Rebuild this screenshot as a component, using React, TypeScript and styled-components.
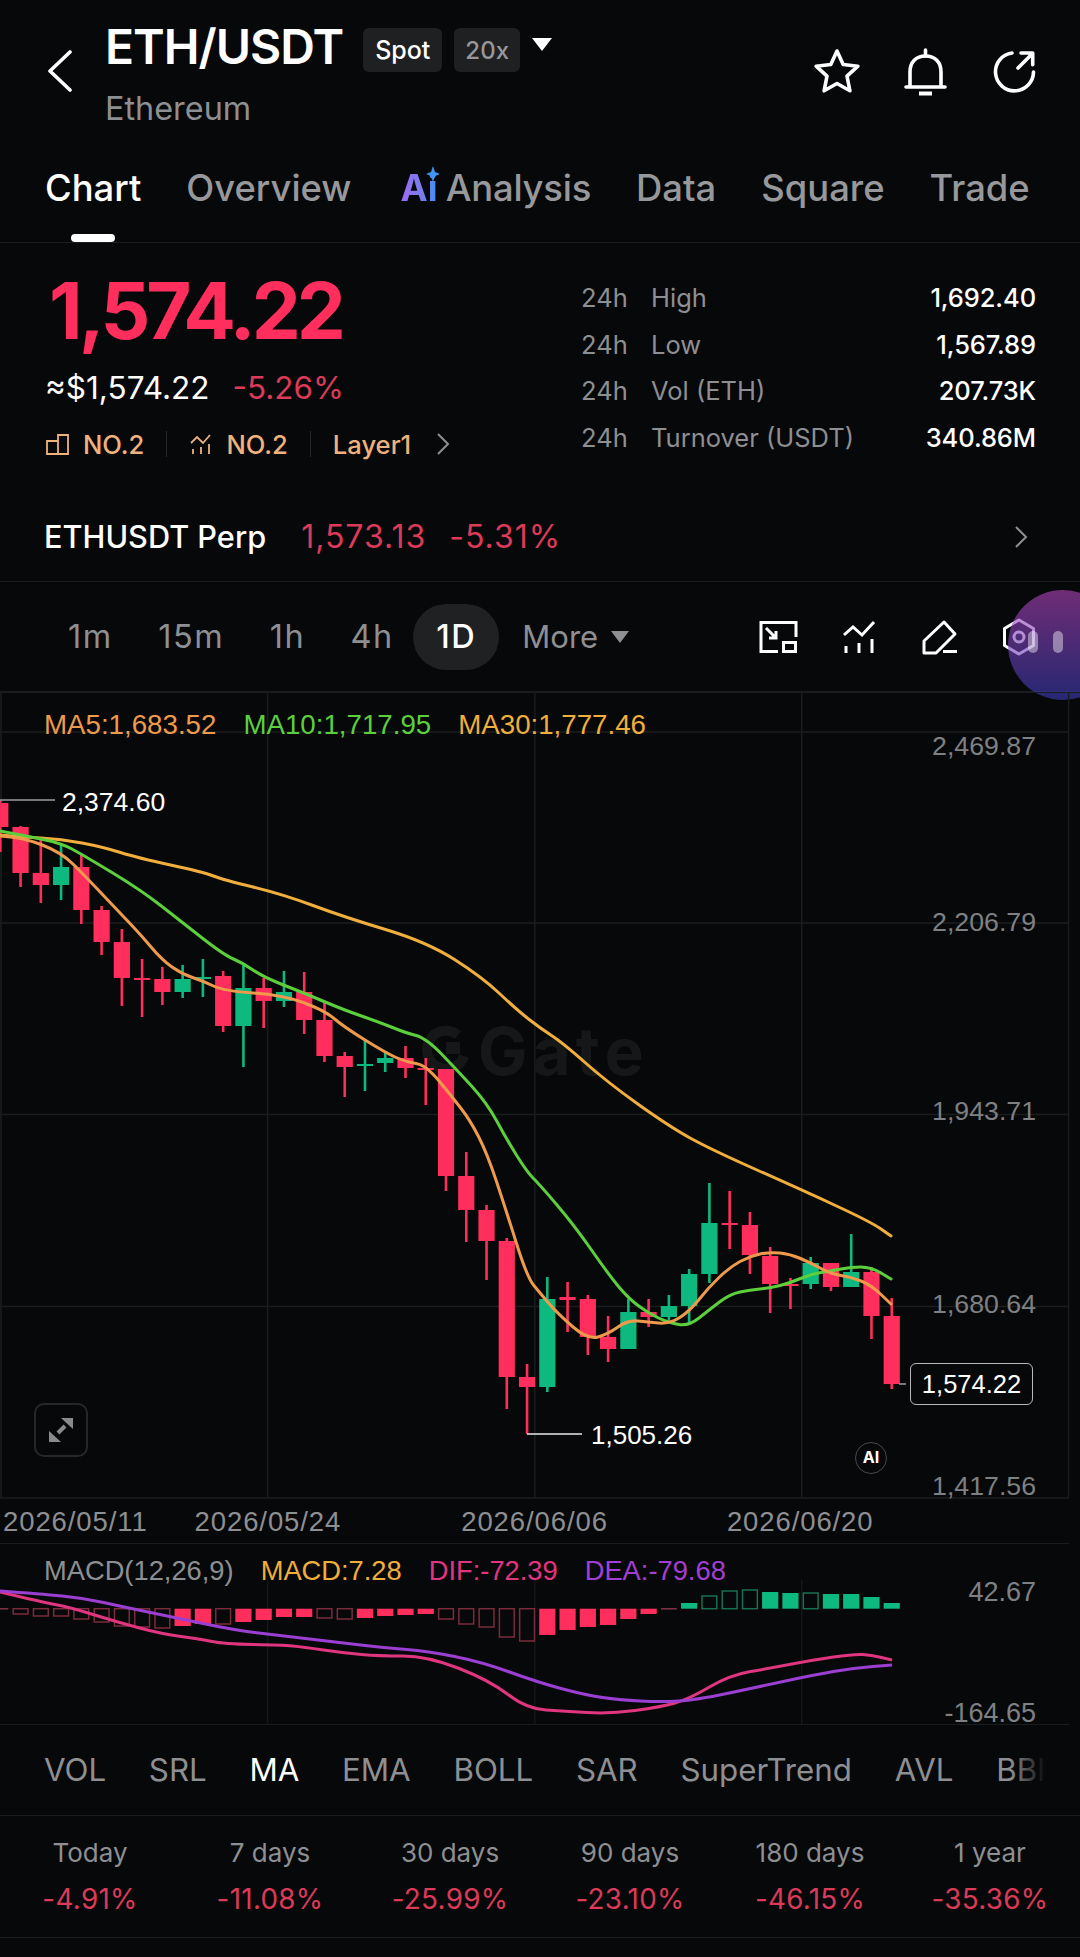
import React from 'react'
import styled, { createGlobalStyle } from 'styled-components'

const BG = '#070809'
const LINE = '#1b1c1e'
const RED = '#ff2e5c'
const SOFT_RED = '#db3a58'
const GREEN = '#0db97e'
const GREY = '#8e8f92'
const PEACH = '#f0b27c'

type Candle = [number, number, number, number, number] // green?, top, bottom, wickTop, wickBottom

// y values are page pixels, the chart svg uses the same coordinates in its viewBox
const candles: Candle[] = [
  [0, 803, 827, 800, 852],
  [0, 827, 873, 826, 887],
  [0, 873, 885, 840, 903],
  [1, 867, 885, 843, 900],
  [0, 867, 910, 855, 924],
  [0, 910, 942, 906, 955],
  [0, 942, 978, 929, 1006],
  [0, 978, 980, 959, 1017],
  [0, 979, 992, 967, 1005],
  [1, 979, 992, 965, 998],
  [1, 977, 979, 959, 997],
  [0, 976, 1026, 971, 1032],
  [1, 988, 1026, 963, 1067],
  [0, 988, 1001, 978, 1028],
  [1, 992, 1001, 971, 1007],
  [0, 992, 1020, 972, 1034],
  [0, 1020, 1056, 1003, 1062],
  [0, 1056, 1067, 1052, 1097],
  [1, 1064, 1066, 1041, 1091],
  [1, 1058, 1063, 1053, 1072],
  [0, 1058, 1068, 1046, 1078],
  [0, 1068, 1070, 1058, 1105],
  [0, 1069, 1176, 1069, 1191],
  [0, 1176, 1210, 1152, 1242],
  [0, 1210, 1241, 1205, 1280],
  [0, 1241, 1377, 1238, 1409],
  [0, 1377, 1387, 1364, 1434],
  [1, 1299, 1387, 1277, 1392],
  [0, 1297, 1300, 1282, 1332],
  [0, 1299, 1337, 1295, 1355],
  [0, 1337, 1349, 1316, 1362],
  [1, 1312, 1349, 1299, 1349],
  [0, 1312, 1317, 1299, 1327],
  [1, 1306, 1317, 1295, 1321],
  [1, 1274, 1306, 1269, 1325],
  [1, 1223, 1274, 1183, 1283],
  [0, 1223, 1225, 1191, 1249],
  [0, 1225, 1255, 1212, 1274],
  [0, 1256, 1284, 1247, 1313],
  [0, 1284, 1286, 1278, 1309],
  [1, 1263, 1284, 1257, 1289],
  [0, 1263, 1287, 1263, 1291],
  [1, 1272, 1287, 1234, 1287],
  [0, 1272, 1316, 1267, 1339],
  [0, 1316, 1384, 1298, 1389],
]

const ma30 = '0,835 21,837 61,839 103,847 138,858 203,872 224,880 282,894 344,917 427,942 482,977 517,1010 540,1028 563,1043 607,1082 670,1127 712,1150 802,1190 871,1222 891,1236'
const ma10 = '0,831 21,835 61,843 83,855 141,890 183,923 224,955 243,963 263,977 304,993 344,1010 379,1022 406,1033 426,1038 457,1070 487,1103 507,1140 527,1172 540,1185 574,1225 609,1275 628,1298 648,1313 669,1323 689,1326 709,1310 730,1294 750,1290 770,1288 790,1283 811,1274 831,1271 851,1267 871,1267 891,1279'
const ma5 = '0,836 21,837 61,852 86,877 120,913 141,935 162,960 182,974 203,981 224,991 282,995 324,1010 344,1027 386,1053 406,1062 426,1065 453,1098 470,1120 487,1153 506,1210 527,1277 540,1293 557,1313 588,1340 608,1334 628,1320 648,1322 669,1324 689,1312 709,1287 730,1267 750,1256 770,1252 790,1254 811,1263 831,1274 851,1277 871,1285 891,1304'

const gridX = [1, 267.6, 534.8, 801.7, 1068.6]
const gridY = [732, 923, 1114.5, 1306.5, 1498]
const axisLabels: [string, number][] = [
  ['2,469.87', 746],
  ['2,206.79', 922],
  ['1,943.71', 1111],
  ['1,680.64', 1304],
  ['1,417.56', 1486],
]

// [bar end y, solid?] with zero line at y=1608.7
const macdBars: [number, number][] = [
  [1610, 0], [1614, 0], [1616, 0], [1616, 0], [1619, 0], [1622, 0], [1626, 0], [1627, 0], [1628, 0], [1626, 1],
  [1624, 1], [1624, 0], [1622, 1], [1620, 1], [1617, 1], [1617, 1], [1618, 0], [1619, 0], [1618, 1], [1616, 1],
  [1615, 1], [1614, 1], [1619, 0], [1624, 0], [1627, 0], [1637, 0], [1641, 0], [1635, 1], [1630, 1], [1627, 1],
  [1625, 1], [1619, 1], [1614, 1], [1609.5, 0], [1603, 1], [1596, 0], [1591, 0], [1590, 0], [1592, 1], [1593, 1],
  [1593, 0], [1594, 1], [1594, 1], [1597, 1], [1603, 1],
]
const dif = '0,1592 41,1602 69,1607 117,1622 162,1634 200,1639 224,1644 282,1645 303,1647 344,1653 379,1656 427,1656 489,1680 527,1709 565,1711 609,1714 661,1707 689,1699 730,1675 771,1668 813,1660 854,1654 871,1655 892,1660'
const dea = '0,1591 41,1594 83,1598 124,1607 172,1617 234,1630 275,1635 344,1643 386,1648 427,1651 482,1662 537,1682 585,1695 620,1700 661,1702 696,1700 758,1687 813,1675 854,1668 892,1665'

// round the corners of a traced line a little, going through the midpoints
const smooth = (points: string) => {
  const p = points.split(' ').map((s) => s.split(',').map(Number))
  let d = `M${p[0][0]} ${p[0][1]}`
  for (let i = 1; i < p.length - 1; i++) {
    const mx = (p[i][0] + p[i + 1][0]) / 2
    const my = (p[i][1] + p[i + 1][1]) / 2
    d += `Q${p[i][0]} ${p[i][1]} ${mx} ${my}`
  }
  const last = p[p.length - 1]
  return `${d}L${last[0]} ${last[1]}`
}

const tabs = ['Overview', 'Ai', 'Data', 'Square', 'Trade']
const stats = [
  ['High', '1,692.40'],
  ['Low', '1,567.89'],
  ['Vol (ETH)', '207.73K'],
  ['Turnover (USDT)', '340.86M'],
]
const frames = ['1m', '15m', '1h', '4h']
const indicators = ['VOL', 'SRL', 'MA', 'EMA', 'BOLL', 'SAR', 'SuperTrend', 'AVL', 'BBI']
const returns = [
  ['Today', '-4.91%'],
  ['7 days', '-11.08%'],
  ['30 days', '-25.99%'],
  ['90 days', '-23.10%'],
  ['180 days', '-46.15%'],
  ['1 year', '-35.36%'],
]

const GlobalStyle = createGlobalStyle`
  html, body { margin: 0; padding: 0; background: ${BG}; }
  * { box-sizing: border-box; }
`

const Page = styled.div`
  position: relative;
  width: 1080px;
  height: 1957px;
  overflow: hidden;
  background: ${BG};
  color: #fff;
  font-family: Inter, 'Liberation Sans', sans-serif;
`

const TopBar = styled.header`
  display: flex;
  height: 130px;
  padding: 20px 41px 0 48px;
`
const BackIcon = styled.svg`
  width: 24px;
  height: 42px;
  margin-top: 30px;
  margin-right: 33px;
`
const TitleBlock = styled.div`
  display: flex;
  flex-direction: column;
  flex: 1;
`
const TitleRow = styled.div`
  display: flex;
  align-items: center;
  height: 54px;
`
const Title = styled.h1`
  margin: 0 20px 0 0;
  font-size: 48px;
  font-weight: 600;
  letter-spacing: -1px;
  line-height: 54px;
`
const Badge = styled.span<{ $muted?: boolean }>`
  display: flex;
  align-items: center;
  justify-content: center;
  height: 44px;
  padding: 0 ${(p) => (p.$muted ? '11px' : '12px')};
  margin: 6px 12px 0 0;
  border-radius: 6px;
  background: #1f2022;
  font-size: ${(p) => (p.$muted ? '24px' : '25px')};
  font-weight: 500;
  color: ${(p) => (p.$muted ? '#97989b' : '#fff')};
`
const Caret = styled.span`
  width: 0;
  height: 0;
  margin-left: 0;
  margin-top: -6px;
  border-left: 10px solid transparent;
  border-right: 10px solid transparent;
  border-top: 13px solid #fff;
`
const Subtitle = styled.div`
  margin-top: 18px;
  font-size: 32.4px;
  color: ${GREY};
  line-height: 34px;
`
const Actions = styled.div`
  display: flex;
  gap: 43px;
  margin-top: 28px;
  height: 48px;
`

const TabBar = styled.nav`
  position: relative;
  display: flex;
  height: 113px;
  padding: 36px 0 0 45px;
  gap: 45px;
  border-bottom: 1px solid ${LINE};
`
const Tab = styled.span<{ $active?: boolean; $gapLeft?: boolean }>`
  position: relative;
  height: 44px;
  line-height: 44px;
  font-size: 36.4px;
  font-weight: 500;
  color: ${(p) => (p.$active ? '#fff' : '#97989b')};
  margin-left: ${(p) => (p.$gapLeft ? '4px' : '0')};
  display: flex;
`
const TabMark = styled.span`
  position: absolute;
  left: 26px;
  top: 68px;
  width: 44px;
  height: 8px;
  border-radius: 4px;
  background: #fff;
`
const AiMark = styled.span`
  position: relative;
  margin-right: 8px;
  font-weight: 700;
  background: linear-gradient(90deg, #9a6cf2 0%, #7a7cf0 55%, #3f8ff2 100%);
  -webkit-background-clip: text;
  background-clip: text;
  color: transparent;
`
const AiStar = styled.svg`
  position: absolute;
  right: -2px;
  top: 0;
  width: 14px;
  height: 16px;
`
const AnalysisLabel = styled.span`
  letter-spacing: -0.2px;
`

const Summary = styled.section`
  display: flex;
  justify-content: space-between;
  height: 249px;
  padding: 28px 44px 0 45px;
`
const PriceCol = styled.div`
  display: flex;
  flex-direction: column;
`
const BigPrice = styled.div`
  font-size: 78px;
  font-weight: 700;
  line-height: 80px;
  letter-spacing: -3.9px;
  color: ${RED};
  margin-left: 4px;
`
const FiatRow = styled.div`
  display: flex;
  gap: 23px;
  margin-top: 17px;
  font-size: 31.5px;
  line-height: 40px;
`
const Change = styled.span`
  color: ${SOFT_RED};
`
const RankRow = styled.div`
  display: flex;
  align-items: center;
  margin-top: 20px;
  height: 32px;
  font-size: 25.6px;
  font-weight: 500;
  color: ${PEACH};
`
const RankItem = styled.span`
  display: flex;
  align-items: center;
  gap: 14px;
  margin-left: 1px;
`
const RankDivider = styled.span`
  width: 1px;
  height: 26px;
  margin: 0 22px;
  background: #26272a;
`
const ChevronSm = styled.svg`
  width: 14px;
  height: 24px;
  margin-left: 25px;
`
const StatsCol = styled.div`
  display: grid;
  grid-template-columns: 70px 1fr auto;
  grid-auto-rows: 46.7px;
  width: 455px;
  margin-top: 3px;
  align-items: center;
  font-size: 25.5px;
  color: ${GREY};
`
const StatValue = styled.span`
  color: #fff;
  font-weight: 500;
  text-align: right;
  letter-spacing: -0.1px;
`

const PerpRow = styled.a`
  display: flex;
  align-items: center;
  height: 90px;
  padding: 0 52px 0 44px;
  border-bottom: 1px solid ${LINE};
`
const PerpName = styled.span`
  font-size: 30.7px;
  font-weight: 500;
  margin-right: 35px;
`
const PerpValue = styled.span`
  color: ${SOFT_RED};
  font-size: 32px;
  letter-spacing: 1px;
  margin-right: 23px;
`
const Spacer = styled.span`
  flex: 1;
`

const FrameBar = styled.div`
  display: flex;
  align-items: center;
  height: 110px;
  padding: 0 44px 0 68px;
  border-bottom: 1px solid ${LINE};
  font-size: 32.5px;
  letter-spacing: 1.5px;
  color: ${GREY};
`
const Frame = styled.span`
  margin-right: 45.5px;
`
const ActiveFrame = styled.span`
  display: flex;
  align-items: center;
  justify-content: center;
  width: 86px;
  height: 66px;
  margin: 0 23px 0 -26px;
  border-radius: 33px;
  background: #202122;
  color: #fff;
  font-weight: 500;
`
const MoreLabel = styled.span`
  font-size: 31px;
  letter-spacing: 0;
`
const MoreCaret = styled.span`
  width: 0;
  height: 0;
  margin-left: 13px;
  border-left: 9px solid transparent;
  border-right: 9px solid transparent;
  border-top: 12px solid ${GREY};
`
const ToolIcons = styled.div`
  display: flex;
  align-items: center;
  margin-left: auto;
  gap: 43px;
`
const Bubble = styled.div`
  position: absolute;
  left: 1008px;
  top: 590px;
  width: 110px;
  height: 110px;
  border-radius: 50%;
  background: linear-gradient(180deg, rgba(180, 70, 190, 0.6), rgba(60, 60, 185, 0.6));
  display: flex;
  gap: 15px;
  align-items: center;
  padding: 0 0 6px 20px;
`
const BubbleBar = styled.span`
  width: 10px;
  height: 22px;
  border-radius: 5px;
  background: rgba(255, 255, 255, 0.42);
`

const ChartBox = styled.section`
  position: relative;
  height: 806px;
`
const ChartSvg = styled.svg`
  display: block;
  width: 1080px;
  height: 806px;
  overflow: visible;
`
const MacdSvg = styled.svg`
  display: block;
  width: 1080px;
  height: 181px;
  overflow: visible;
`
const Legend = styled.div`
  position: absolute;
  left: 44px;
  top: 18px;
  display: flex;
  gap: 27px;
  font-family: 'Liberation Sans', Arial, sans-serif;
  font-size: 27.7px;
  line-height: 30px;
`
const LegendItem = styled.span<{ $color: string }>`
  color: ${(p) => p.$color};
`
const PriceTag = styled.div`
  position: absolute;
  left: 910px;
  top: 671px;
  width: 123px;
  height: 42px;
  border: 1px solid #b8b9bb;
  border-radius: 6px;
  background: ${BG};
  font-family: 'Liberation Sans', Arial, sans-serif;
  font-size: 25.5px;
  line-height: 40px;
  text-align: center;
`
const AiBadge = styled.div`
  position: absolute;
  left: 855px;
  top: 750px;
  width: 32px;
  height: 32px;
  border-radius: 50%;
  border: 1.5px solid #47484a;
  font-size: 16px;
  font-weight: 700;
  line-height: 29px;
  text-align: center;
`
const ExpandButton = styled.div`
  position: absolute;
  left: 34px;
  top: 711px;
  width: 54px;
  height: 54px;
  border: 2px solid #26272a;
  border-radius: 10px;
  display: flex;
  align-items: center;
  justify-content: center;
`

const DateAxis = styled.div`
  position: relative;
  height: 46px;
  width: 1069px;
  border-bottom: 1px solid ${LINE};
  font-family: 'Liberation Sans', Arial, sans-serif;
  font-size: 27.5px;
  letter-spacing: 0.9px;
  color: ${GREY};
  display: flex;
  align-items: center;
  padding: 3px 0 0 3px;
`
const DateLabel = styled.span<{ $gap: number }>`
  margin-left: ${(p) => p.$gap}px;
`

const MacdBox = styled.section`
  position: relative;
  height: 181px;
  width: 1080px;
`
const MacdLegend = styled.div`
  position: absolute;
  left: 44px;
  top: 12px;
  display: flex;
  gap: 27px;
  font-family: 'Liberation Sans', Arial, sans-serif;
  font-size: 27.3px;
  line-height: 30px;
`

const IndicatorBar = styled.div`
  position: relative;
  display: flex;
  align-items: center;
  gap: 42.7px;
  height: 90px;
  padding: 0 0 0 44px;
  width: 1046px;
  overflow: hidden;
  white-space: nowrap;
  font-size: 31.3px;
  color: ${GREY};
  &::after {
    content: '';
    position: absolute;
    right: 0;
    top: 0;
    bottom: 0;
    width: 36px;
    background: linear-gradient(90deg, rgba(7, 8, 9, 0), ${BG});
  }
`
const Indicator = styled.span<{ $active?: boolean }>`
  flex: none;
  color: ${(p) => (p.$active ? '#fff' : GREY)};
`

const ReturnsGrid = styled.section`
  display: grid;
  grid-template-columns: repeat(6, 180px);
  height: 123px;
  padding-top: 19px;
  border-top: 1px solid ${LINE};
  border-bottom: 1px solid ${LINE};
  text-align: center;
`
const ReturnLabel = styled.div`
  color: ${GREY};
  font-size: 26px;
  line-height: 36px;
`
const ReturnValue = styled.div`
  margin-top: 10px;
  color: ${SOFT_RED};
  font-size: 27.8px;
  letter-spacing: 0.3px;
  line-height: 36px;
`

const ChartDrawing = () => (
  <ChartSvg viewBox="0 692 1080 806">
    <line x1="0" x2="1080" y1="692.5" y2="692.5" stroke={LINE} strokeWidth="1" />
    {gridY.map((y) => (
      <line key={y} x1="0" x2="1069" y1={y} y2={y} stroke={LINE} strokeWidth="1.5" />
    ))}
    {gridX.map((x) => (
      <line key={x} x1={x} x2={x} y1="692" y2="1498" stroke={LINE} strokeWidth="1.5" />
    ))}
    <g fill="#161719">
      <path d="M458 1035A19 19 0 1 0 464 1056" fill="none" stroke="#161719" strokeWidth="10" />
      <rect x="446" y="1042" width="14" height="12" />
      <text x="478" y="1075" fontFamily="Inter, sans-serif" fontWeight="700" fontSize="66" letterSpacing="5">Gate</text>
    </g>
    {candles.map(([up, top, bottom, wickTop, wickBottom], i) => {
      const cx = 0.3 + 20.26 * i
      const color = up ? GREEN : RED
      return (
        <g key={i} fill={color}>
          <rect x={cx - 1.3} y={wickTop} width="2.6" height={wickBottom - wickTop} />
          <rect x={cx - 8.1} y={top} width="16.2" height={bottom - top} />
        </g>
      )
    })}
    <g fill="none" strokeWidth="3" strokeLinejoin="round" strokeLinecap="round">
      <path d={smooth(ma30)} stroke="#f0ae3c" />
      <path d={smooth(ma10)} stroke="#5ccf3d" />
      <path d={smooth(ma5)} stroke="#ee9a4c" />
    </g>
    <line x1="0" x2="55" y1="800" y2="800" stroke="#9a9b9d" strokeWidth="1.5" />
    <line x1="527" x2="582" y1="1434" y2="1434" stroke="#e8e8e8" strokeWidth="1.5" />
    <line x1="899" x2="906" y1="1384" y2="1384" stroke="#9a9b9d" strokeWidth="1.5" />
    <g fontFamily="'Liberation Sans', Arial, sans-serif" fontSize="26.5">
      <text x="62" y="811" fill="#fff">2,374.60</text>
      <text x="591" y="1444" fill="#fff" fontSize="26">1,505.26</text>
      {axisLabels.map(([label, y]) => (
        <text key={label} x="1036" y={y + 9} textAnchor="end" fill="#7f8083" fontSize="26.7">{label}</text>
      ))}
    </g>
  </ChartSvg>
)

const MacdDrawing = () => (
  <MacdSvg viewBox="0 1544 1080 181">
    {gridX.slice(1, 4).map((x) => (
      <line key={x} x1={x} x2={x} y1="1580" y2="1725" stroke="#151618" strokeWidth="1.5" />
    ))}
    <line x1="0" x2="1069" y1="1724.5" y2="1724.5" stroke={LINE} strokeWidth="1" />
    {macdBars.map(([end, solid], i) => {
      const cx = 0.3 + 20.26 * i
      const up = i > 33
      const y = Math.min(end, 1608.7)
      const h = Math.abs(end - 1608.7)
      if (i === 0 || i === 33) {
        return <rect key={i} x={cx - 8} y="1608" width="16" height="1.6" fill="#7a3040" />
      }
      if (solid) {
        return <rect key={i} x={cx - 8.1} y={y} width="16.2" height={h} fill={up ? GREEN : RED} />
      }
      return (
        <rect key={i} x={cx - 7.4} y={y} width="14.8" height={h} fill="none" stroke={up ? '#17704f' : '#7a2c3c'} strokeWidth="1.5" />
      )
    })}
    <g fill="none" strokeWidth="3" strokeLinejoin="round">
      <path d={smooth(dif)} stroke="#e0357f" />
      <path d={smooth(dea)} stroke="#9a3fd2" />
    </g>
    <g fontFamily="'Liberation Sans', Arial, sans-serif" fontSize="27" fill="#7f8083">
      <text x="1036" y="1601" textAnchor="end">42.67</text>
      <text x="1036" y="1722" textAnchor="end">-164.65</text>
    </g>
  </MacdSvg>
)

const App = () => {
  return (
    <Page>
      <GlobalStyle />
      <TopBar>
        <BackIcon viewBox="0 0 24 42" fill="none" stroke="#fff" strokeWidth="3.6" strokeLinecap="round" strokeLinejoin="round">
          <path d="M22 2 2 21l20 19" />
        </BackIcon>
        <TitleBlock>
          <TitleRow>
            <Title>ETH/USDT</Title>
            <Badge>Spot</Badge>
            <Badge $muted>20x</Badge>
            <Caret />
          </TitleRow>
          <Subtitle>Ethereum</Subtitle>
        </TitleBlock>
        <Actions>
          <svg width="48" height="46" viewBox="0 0 48 46" fill="none" stroke="#fff" strokeWidth="3.6" strokeLinejoin="round">
            <path d="M24 3 30.2 16.5 44.9 18.2 34 28.2 36.9 42.8 24 35.5 11.1 42.8 14 28.2 3.1 18.2 17.8 16.5Z" />
          </svg>
          <svg width="44" height="48" viewBox="0 0 44 48" fill="none" stroke="#fff" strokeWidth="3.6">
            <path d="M6 39V24C6 14 12 8 21.5 8S37 14 37 24V39" />
            <path d="M21.5 2V8M2 39H41" strokeLinecap="round" />
            <path d="M15 45.5H28" strokeWidth="4" />
          </svg>
          <svg width="48" height="48" viewBox="0 0 48 48" fill="none" stroke="#fff" strokeWidth="3.6" strokeLinecap="round" strokeLinejoin="round">
            <path d="M21 5A19 19 0 1 0 42.5 24" />
            <path d="M27 20 41 6M30 5H41.7V16.7" />
          </svg>
        </Actions>
      </TopBar>

      <TabBar>
        <Tab $active>
          Chart
          <TabMark />
        </Tab>
        {tabs.map((t) =>
          t === 'Ai' ? (
            <Tab key={t} $gapLeft>
              <AiMark>
                Ai
                <AiStar viewBox="0 0 14 16">
                  <path d="M7 0 9 6 14 8 9 10 7 16 5 10 0 8 5 6Z" fill="#3f97f5" />
                </AiStar>
              </AiMark>
              <AnalysisLabel>Analysis</AnalysisLabel>
            </Tab>
          ) : (
            <Tab key={t}>{t}</Tab>
          ),
        )}
      </TabBar>

      <Summary>
        <PriceCol>
          <BigPrice>1,574.22</BigPrice>
          <FiatRow>
            <span>≈$1,574.22</span>
            <Change>-5.26%</Change>
          </FiatRow>
          <RankRow>
            <RankItem>
              <svg width="23" height="21" viewBox="0 0 23 21" fill="none" stroke={PEACH} strokeWidth="1.8">
                <path d="M1 7H12V20H1ZM12 1H22V20H12Z" />
              </svg>
              NO.2
            </RankItem>
            <RankDivider />
            <RankItem>
              <svg width="22" height="21" viewBox="0 0 22 21" fill="none" stroke={PEACH} strokeWidth="1.8">
                <path d="M1 9 7 3 13 9 20 1M3 20V15M11 20V13M19 20V10" />
              </svg>
              NO.2
            </RankItem>
            <RankDivider />
            <span>Layer1</span>
            <ChevronSm viewBox="0 0 14 24" fill="none" stroke="#8e8f92" strokeWidth="2">
              <path d="M2 2 12 12 2 22" />
            </ChevronSm>
          </RankRow>
        </PriceCol>
        <StatsCol>
          {stats.map(([label, value]) => (
            <React.Fragment key={label}>
              <span>24h</span>
              <span>{label}</span>
              <StatValue>{value}</StatValue>
            </React.Fragment>
          ))}
        </StatsCol>
      </Summary>

      <PerpRow>
        <PerpName>ETHUSDT Perp</PerpName>
        <PerpValue>1,573.13</PerpValue>
        <PerpValue>-5.31%</PerpValue>
        <Spacer />
        <svg width="14" height="24" viewBox="0 0 14 24" fill="none" stroke="#8e8f92" strokeWidth="2">
          <path d="M2 2 12 12 2 22" />
        </svg>
      </PerpRow>

      <FrameBar>
        {frames.map((f) => (
          <Frame key={f}>{f}</Frame>
        ))}
        <ActiveFrame>1D</ActiveFrame>
        <MoreLabel>More</MoreLabel>
        <MoreCaret />
        <ToolIcons>
          <svg width="40" height="34" viewBox="0 0 40 34" fill="none" stroke="#fff" strokeWidth="3">
            <path d="M19 31.5H2V2.5H37V17" />
            <rect x="24.5" y="22.5" width="12" height="9" />
            <path d="M7 8 17 18M10 18H17V11" />
          </svg>
          <svg width="36" height="34" viewBox="0 0 36 34" fill="none" stroke="#fff" strokeWidth="3">
            <path d="M2 15 11 7 20 15 32 2M4 33V26M17 33V23M30 33V19" />
          </svg>
          <svg width="38" height="36" viewBox="0 0 38 36" fill="none" stroke="#fff" strokeWidth="3" strokeLinejoin="round">
            <path d="M3 22 23 3 34 15 15 34H3ZM22 32.500H36" />
          </svg>
          <svg width="34" height="38" viewBox="0 0 34 38" fill="none" stroke="#fff" strokeWidth="3" strokeLinejoin="round">
            <path d="M17 2 31.500 10.500V27.500L17 36 2.500 27.500V10.500Z" />
            <circle cx="17" cy="19" r="5" />
          </svg>
        </ToolIcons>
      </FrameBar>
      <Bubble>
        <BubbleBar />
        <BubbleBar />
      </Bubble>

      <ChartBox>
        <ChartDrawing />
        <Legend>
          <LegendItem $color="#ee9a4c">MA5:1,683.52</LegendItem>
          <LegendItem $color="#5ccf3d">MA10:1,717.95</LegendItem>
          <LegendItem $color="#f0ae3c">MA30:1,777.46</LegendItem>
        </Legend>
        <PriceTag>1,574.22</PriceTag>
        <AiBadge>AI</AiBadge>
        <ExpandButton>
          <svg width="26" height="26" viewBox="0 0 26 26" fill="#8a8a8a" stroke="none">
            <path d="M13 1H25V12ZM1 14V25H13Z" />
            <path d="M10 16 17 9" stroke="#8a8a8a" strokeWidth="4" />
          </svg>
        </ExpandButton>
      </ChartBox>

      <DateAxis>
        <DateLabel $gap={0}>2026/05/11</DateLabel>
        <DateLabel $gap={47}>2026/05/24</DateLabel>
        <DateLabel $gap={120}>2026/06/06</DateLabel>
        <DateLabel $gap={119}>2026/06/20</DateLabel>
      </DateAxis>

      <MacdBox>
        <MacdDrawing />
        <MacdLegend>
          <LegendItem $color={GREY}>MACD(12,26,9)</LegendItem>
          <LegendItem $color="#f0ae3c">MACD:7.28</LegendItem>
          <LegendItem $color="#e0357f">DIF:-72.39</LegendItem>
          <LegendItem $color="#a23fd3">DEA:-79.68</LegendItem>
        </MacdLegend>
      </MacdBox>

      <IndicatorBar>
        {indicators.map((n) => (
          <Indicator key={n} $active={n === 'MA'}>{n}</Indicator>
        ))}
      </IndicatorBar>

      <ReturnsGrid>
        {returns.map(([label, value]) => (
          <div key={label}>
            <ReturnLabel>{label}</ReturnLabel>
            <ReturnValue>{value}</ReturnValue>
          </div>
        ))}
      </ReturnsGrid>
    </Page>
  )
}

export default App
